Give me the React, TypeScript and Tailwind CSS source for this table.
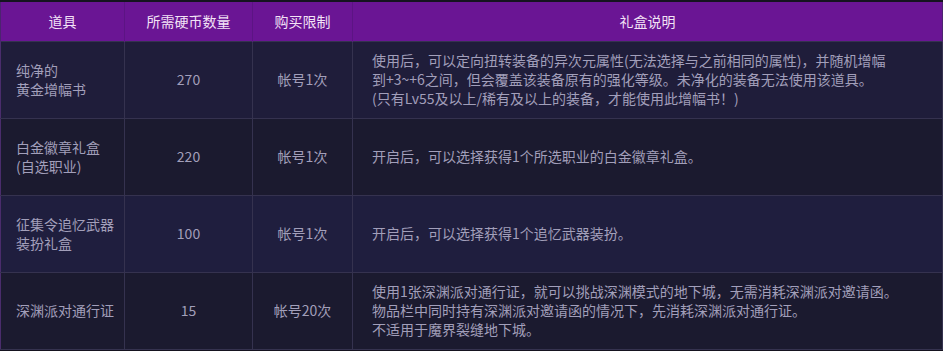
import React from 'react'

const rows = [
  {
    name: ['纯净的', '黄金增幅书'],
    coins: '270',
    limit: '帐号1次',
    desc: [
      '使用后，可以定向扭转装备的异次元属性(无法选择与之前相同的属性)，并随机增幅',
      '到+3~+6之间，但会覆盖该装备原有的强化等级。未净化的装备无法使用该道具。',
      '(只有Lv55及以上/稀有及以上的装备，才能使用此增幅书！)',
    ],
    bg: 'bg-[#1f1d3a]',
  },
  {
    name: ['白金徽章礼盒', '(自选职业)'],
    coins: '220',
    limit: '帐号1次',
    desc: ['开启后，可以选择获得1个所选职业的白金徽章礼盒。'],
    bg: 'bg-[#1b1a2f]',
  },
  {
    name: ['征集令追忆武器', '装扮礼盒'],
    coins: '100',
    limit: '帐号1次',
    desc: ['开启后，可以选择获得1个追忆武器装扮。'],
    bg: 'bg-[#1f1e3e]',
  },
  {
    name: ['深渊派对通行证'],
    coins: '15',
    limit: '帐号20次',
    desc: [
      '使用1张深渊派对通行证，就可以挑战深渊模式的地下城，无需消耗深渊派对邀请函。',
      '物品栏中同时持有深渊派对邀请函的情况下，先消耗深渊派对通行证。',
      '不适用于魔界裂缝地下城。',
    ],
    bg: 'bg-[#1b1a2f]',
  },
]

export default function App() {
  return (
    <div
      className="w-[943px] h-[351px] bg-[#15131f] pt-[2px] pb-[2px]"
      style={{ fontFamily: '"Noto Sans CJK SC", "Noto Sans", sans-serif' }}
    >
      <table className="w-full border-collapse table-fixed text-[14px] leading-[19px]">
        <colgroup>
          <col className="w-[124px]" />
          <col className="w-[128px]" />
          <col className="w-[100px]" />
          <col />
        </colgroup>
        <thead>
          <tr className="h-[39px] bg-[#6a1594] text-[#f2e2f6]">
            <th className="font-normal border-l border-[#4c2470] border-r border-r-[#5c1484]">道具</th>
            <th className="font-normal border-r border-[#5c1484]">所需硬币数量</th>
            <th className="font-normal border-r border-[#5c1484]">购买限制</th>
            <th className="font-normal border-r border-[#4c2470]">礼盒说明</th>
          </tr>
        </thead>
        <tbody className="text-[#a29fba]">
          {rows.map((r) => (
            <tr key={r.coins} className={`h-[77px] ${r.bg}`}>
              <td className="border border-[#35324f] border-l-[#4a2c6c] pl-[15px] pr-2 text-left">
                {r.name.map((l) => (
                  <div key={l}>{l}</div>
                ))}
              </td>
              <td className="border border-[#35324f] text-center">{r.coins}</td>
              <td className="border border-[#35324f] text-center">{r.limit}</td>
              <td className="border border-[#35324f] pl-[19px] pr-3">
                {r.desc.map((l) => (
                  <div key={l}>{l}</div>
                ))}
              </td>
            </tr>
          ))}
        </tbody>
      </table>
    </div>
  )
}
